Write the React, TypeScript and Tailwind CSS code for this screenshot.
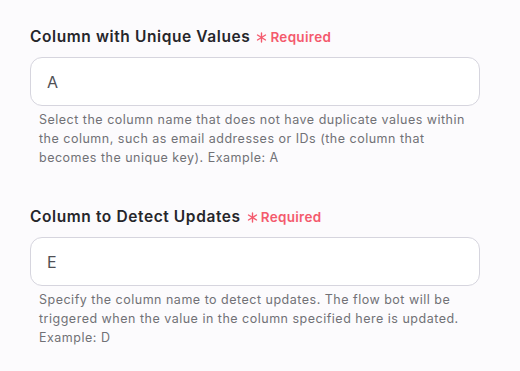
import React from 'react';

interface FieldProps {
  label: string;
  value: string;
  help: string;
}

function Asterisk() {
  return (
    <svg width="11" height="11" viewBox="0 0 11 11" className="ml-[6px] mr-[3px] self-center mt-[3px]">
      <g stroke="#f45a6d" strokeWidth="1.4" strokeLinecap="round">
        <line x1="5.5" y1="1" x2="5.5" y2="10" />
        <line x1="1.5" y1="3" x2="9.5" y2="8" />
        <line x1="9.5" y1="3" x2="1.5" y2="8" />
      </g>
    </svg>
  );
}

function Field({ label, value, help }: FieldProps) {
  return (
    <div>
      <div className="flex items-baseline h-[22px]">
        <span className="text-[15.5px] font-semibold text-[#26262b] tracking-[0.6px]">{label}</span>
        <Asterisk />
        <span className="text-[13.5px] font-semibold text-[#f45a6d] tracking-[0.3px]">Required</span>
      </div>
      <div className="mt-[10px] h-[49px] w-[450px] rounded-[12px] border border-[#d6d5de] bg-white flex items-center px-[16px] text-[16px] text-[#505055]">
        {value}
      </div>
      <p className="mt-[4px] pl-[9px] pr-[12px] w-[450px] text-[12.5px] leading-[19px] text-[#717176] tracking-[0.5px]">
        {help}
      </p>
    </div>
  );
}

export default function App() {
  return (
    <div
      className="w-[520px] h-[371px] bg-[#fcfbfd] pl-[30px] pt-[25px]"
      style={{ fontFamily: 'Inter, "Noto Sans", sans-serif' }}
    >
      <Field
        label="Column with Unique Values"
        value="A"
        help="Select the column name that does not have duplicate values within the column, such as email addresses or IDs (the column that becomes the unique key). Example: A"
      />
      <div className="h-[38px]" />
      <Field
        label="Column to Detect Updates"
        value="E"
        help="Specify the column name to detect updates. The flow bot will be triggered when the value in the column specified here is updated. Example: D"
      />
    </div>
  );
}
